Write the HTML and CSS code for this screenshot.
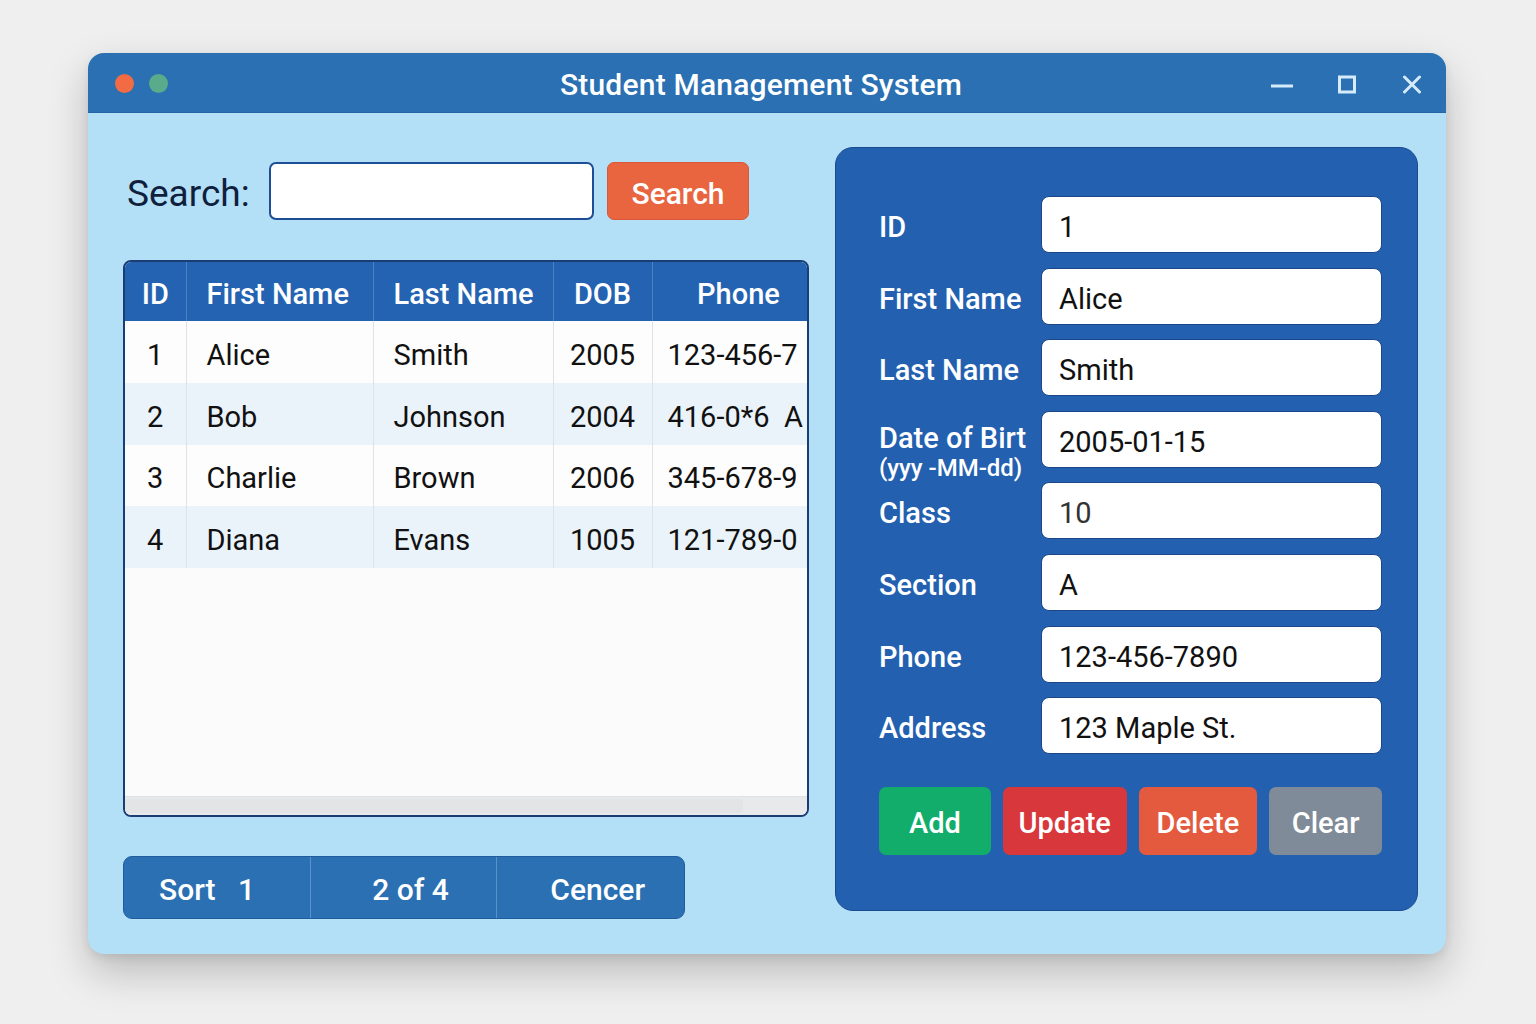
FILE: index.html
```html
<!DOCTYPE html>
<html lang="en">
<head>
<meta charset="utf-8">
<title>Student Management System</title>
<link rel="stylesheet" href="styles.css">
</head>
<body>
<div class="window">
  <div class="titlebar">
    <div class="dots"><span class="dot red"></span><span class="dot green"></span></div>
    <div class="title">Student Management System</div>
    <div class="controls">
      <svg class="ic-min" width="22" height="24" viewBox="0 0 22 24"><line x1="0" y1="14" x2="22" y2="14" stroke="#d6ebfa" stroke-width="3"/></svg>
      <svg class="ic-max" width="18" height="24" viewBox="0 0 18 24"><rect x="1.5" y="5" width="15" height="15" fill="none" stroke="#d6ebfa" stroke-width="3"/></svg>
      <svg class="ic-close" width="18" height="24" viewBox="0 0 18 24"><path d="M1.5 5 L16.5 20 M16.5 5 L1.5 20" stroke="#d6ebfa" stroke-width="3" stroke-linecap="round"/></svg>
    </div>
  </div>
  <div class="content">
    <div class="left">
      <div class="search-row">
        <span class="search-label">Search:</span>
        <div class="search-input"></div>
        <button class="btn btn-search">Search</button>
      </div>
      <div class="table-box">
        <table class="grid">
          <colgroup>
            <col class="c-id"><col class="c-first"><col class="c-last"><col class="c-dob"><col class="c-phone">
          </colgroup>
          <thead>
            <tr><th class="center">ID</th><th>First Name</th><th>Last Name</th><th class="center">DOB</th><th class="center">Phone</th></tr>
          </thead>
          <tbody>
            <tr><td class="center">1</td><td>Alice</td><td>Smith</td><td class="center">2005</td><td class="phone">123-456-7</td></tr>
            <tr class="alt"><td class="center">2</td><td>Bob</td><td>Johnson</td><td class="center">2004</td><td class="phone">416-0*6&nbsp; A</td></tr>
            <tr><td class="center">3</td><td>Charlie</td><td>Brown</td><td class="center">2006</td><td class="phone">345-678-9</td></tr>
            <tr class="alt"><td class="center">4</td><td>Diana</td><td>Evans</td><td class="center">1005</td><td class="phone">121-789-0</td></tr>
          </tbody>
        </table>
        <div class="filler"></div>
        <div class="hscroll"><div class="thumb"></div></div>
      </div>
      <div class="pager">
        <div class="seg seg-first">Sort&nbsp;&nbsp; 1</div>
        <div class="seg">2 of 4</div>
        <div class="seg">Cencer</div>
      </div>
    </div>
    <div class="form-panel">
      <div class="form-grid">
        <div class="lbl">ID</div><div class="field">1</div>
        <div class="lbl">First Name</div><div class="field">Alice</div>
        <div class="lbl">Last Name</div><div class="field">Smith</div>
        <div class="lbl lbl-dob"><span>Date of Birt</span><span class="sub">(yyy -MM-dd)</span></div><div class="field">2005-01-15</div>
        <div class="lbl">Class</div><div class="field muted">10</div>
        <div class="lbl">Section</div><div class="field">A</div>
        <div class="lbl">Phone</div><div class="field">123-456-7890</div>
        <div class="lbl">Address</div><div class="field">123 Maple St.</div>
      </div>
      <div class="actions">
        <button class="btn act add">Add</button>
        <button class="btn act update">Update</button>
        <button class="btn act delete">Delete</button>
        <button class="btn act clear">Clear</button>
      </div>
    </div>
  </div>
</div>
</body>
</html>
```
FILE: styles.css
```css
* { box-sizing: border-box; }
html, body { margin: 0; padding: 0; }
body {
  background: #efefef;
  font-family: Roboto, "Liberation Sans", Arial, sans-serif;
  width: 1536px;
  height: 1024px;
  overflow: hidden;
  padding: 53px 0 0 88px;
}
.window {
  width: 1358px;
  height: 901px;
  background: #b3e0f7;
  border-radius: 16px;
  overflow: hidden;
  box-shadow: 0 18px 40px rgba(0,0,0,0.22), 0 4px 10px rgba(0,0,0,0.08);
  display: flex;
  flex-direction: column;
}
.titlebar {
  height: 60px;
  flex: none;
  background: #2a70b2;
  border-bottom: 1px solid #2566a6;
  display: grid;
  grid-template-columns: 1fr auto 1fr;
  align-items: center;
  padding-top: 2px;
}
.dots { display: flex; gap: 15px; padding-left: 27px; }
.dot { width: 19px; height: 19px; border-radius: 50%; display: block; }
.dot.red { background: #f26b43; }
.dot.green { background: #5aab8b; }
.title {
  color: #fff;
  font-size: 30px;
  font-weight: 500;
  letter-spacing: 0.2px;
  margin-right: 12px;
  padding-top: 2px;
}
.controls {
  display: flex;
  justify-content: flex-end;
  align-items: center;
  padding-right: 25px;
}
.controls svg { display: block; }
.ic-max { margin-left: 45px; }
.ic-close { margin-left: 47px; }

.content {
  flex: 1;
  display: flex;
  padding: 34px 28px 0 35px;
  gap: 26px;
}
.left {
  width: 686px;
  padding-top: 15px;
  display: flex;
  flex-direction: column;
}
.search-row {
  display: flex;
  align-items: center;
  height: 58px;
}
.search-label {
  color: #0f1f3d;
  font-size: 37px;
  margin-left: 4px;
  width: 142px;
  padding-top: 4px;
}
.search-input {
  width: 325px;
  height: 58px;
  background: #fff;
  border: 2px solid #1d4e96;
  border-radius: 7px;
}
.btn {
  font-family: inherit;
  border: none;
  color: #fff;
  font-weight: 500;
  cursor: pointer;
  padding: 4px 0 0;
}
.btn-search {
  margin-left: 13px;
  width: 142px;
  height: 58px;
  background: #e8653f;
  border-radius: 7px;
  font-size: 30px;
  border: 1px solid #d8583a;
}

.table-box {
  margin-top: 40px;
  height: 557px;
  border: 2px solid #1b3d73;
  border-radius: 8px;
  overflow: hidden;
  display: flex;
  flex-direction: column;
  background: #fbfbfb;
}
.grid {
  border-collapse: collapse;
  table-layout: fixed;
  width: 700px;
  flex: none;
}
.c-id { width: 61px; }
.c-first { width: 187px; }
.c-last { width: 180px; }
.c-dob { width: 99px; }
.c-phone { width: 173px; }
.grid th {
  height: 59px;
  background: #2463b1;
  color: #fff;
  font-size: 29px;
  font-weight: 500;
  text-align: left;
  padding: 4px 0 0 20px;
  border-right: 1px solid #4a83c4;
  white-space: nowrap;
}
.grid td {
  height: 61.75px;
  font-size: 29px;
  color: #111;
  padding: 6px 0 0 20px;
  border-right: 1px solid #dde3e9;
  background: #fdfdfd;
  white-space: nowrap;
}
.grid tr.alt td { background: #eaf3fa; }
.grid th.center, .grid td.center { text-align: center; padding-left: 0; }
.grid td.phone { padding-left: 15px; }
.filler { flex: 1; background: #fbfbfb; }
.hscroll {
  height: 19px;
  flex: none;
  background: #e8e9ea;
  border-top: 1px solid #e0e1e3;
  padding: 2px 64px 2px 0;
}
.thumb { height: 100%; background: #e3e4e5; border-radius: 4px; }

.pager {
  margin-top: 39px;
  width: 562px;
  height: 63px;
  background: #2a70b2;
  border: 1px solid #1f5d9d;
  border-radius: 9px;
  display: grid;
  grid-template-columns: 1fr 1fr 1fr;
  overflow: hidden;
}
.seg {
  display: flex;
  align-items: center;
  justify-content: center;
  color: #fff;
  font-size: 30px;
  font-weight: 500;
  border-right: 1px solid #5a93cc;
  white-space: pre;
  padding: 4px 0 0 14px;
}
.seg.seg-first { justify-content: flex-start; padding-left: 35px; }
.seg:last-child { border-right: none; }

.form-panel {
  width: 583px;
  height: 764px;
  background: #2360b0;
  border: 1px solid #1b4b8f;
  border-radius: 18px;
  padding: 48px 35px 0 43px;
}
.form-grid {
  display: grid;
  grid-template-columns: 162px 341px;
  grid-auto-rows: 57px;
  row-gap: 14.6px;
}
.lbl {
  color: #fff;
  font-size: 29px;
  font-weight: 500;
  display: flex;
  align-items: center;
  white-space: nowrap;
  padding-top: 5px;
}
.lbl-dob {
  flex-direction: column;
  align-items: flex-start;
  align-self: start;
  padding-top: 12px;
  margin-bottom: -14px;
}
.lbl-dob span { line-height: 30px; }
.lbl-dob .sub { font-size: 24px; line-height: 30px; font-weight: 500; }
.field {
  background: #fff;
  border: 1px solid #1b4789;
  border-radius: 8px;
  font-size: 29px;
  color: #111;
  display: flex;
  align-items: center;
  padding: 5px 0 0 17px;
}
.field.muted { color: #333; }
.actions {
  display: flex;
  gap: 12px;
  margin-top: 33px;
}
.act {
  height: 68px;
  border-radius: 7px;
  font-size: 29px;
}
.add { width: 112px; background: #12ad6a; }
.update { width: 124px; background: #d8373c; }
.delete { width: 119px; background: #e45a3e; }
.clear { width: 113px; background: #7f8b98; }
```
